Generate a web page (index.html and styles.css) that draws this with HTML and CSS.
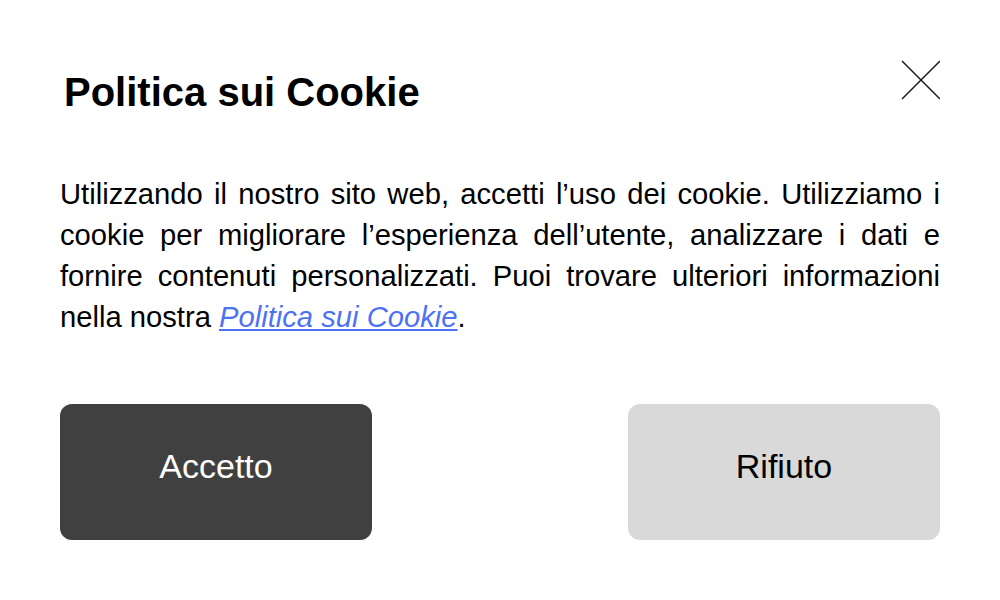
FILE: index.html
```html
<!DOCTYPE html>
<html lang="it">
<head>
<meta charset="utf-8">
<title>Politica sui Cookie</title>
<link rel="stylesheet" href="styles.css">
</head>
<body>
<div class="dialog">
  <div class="header">
    <h1 class="title">Politica sui Cookie</h1>
    <button class="close" aria-label="Chiudi">
      <svg width="40" height="40" viewBox="0 0 40 40"><path d="M2 1 L40 39 M2 39 L40 1" stroke="#1a1a1a" stroke-width="1.5" fill="none"/></svg>
    </button>
  </div>
  <p class="text">Utilizzando il nostro sito web, accetti l’uso dei cookie. Utilizziamo i cookie per migliorare l’esperienza dell’utente, analizzare i dati e fornire contenuti personalizzati. Puoi trovare ulteriori informazioni nella nostra <a href="#" class="link">Politica sui Cookie</a>.</p>
  <div class="actions">
    <button class="btn btn-accept">Accetto</button>
    <button class="btn btn-reject">Rifiuto</button>
  </div>
</div>
</body>
</html>
```
FILE: styles.css
```css
html, body {
  margin: 0;
  padding: 0;
  background: #fff;
}
body {
  font-family: "Liberation Sans", Arial, sans-serif;
  color: #000;
}
.dialog {
  width: 1000px;
  height: 600px;
  box-sizing: border-box;
  padding: 60px 60px 0 60px;
}
.header {
  display: flex;
  justify-content: space-between;
  align-items: flex-start;
  height: 54px;
}
.title {
  margin: 9px 0 0 4px;
  font-size: 40px;
  line-height: 46px;
  font-weight: 700;
}
.close {
  width: 40px;
  height: 40px;
  padding: 0;
  border: 0;
  background: transparent;
  display: block;
}
.close svg {
  display: block;
}
.text {
  margin: 60px 0 0 0;
  font-size: 29.2px;
  line-height: 41px;
  text-align: justify;
}
.link {
  color: #4e72f3;
  font-style: italic;
  text-decoration: underline;
}
.actions {
  margin-top: 66px;
  display: flex;
  justify-content: space-between;
}
.btn {
  width: 312px;
  height: 136px;
  border: 0;
  border-radius: 12px;
  font-family: "Liberation Sans", Arial, sans-serif;
  font-size: 34px;
  padding: 0 0 12px 0;
}
.btn-accept {
  background: #404040;
  color: #fff;
}
.btn-reject {
  background: #d9d9d9;
  color: #000;
}
```
